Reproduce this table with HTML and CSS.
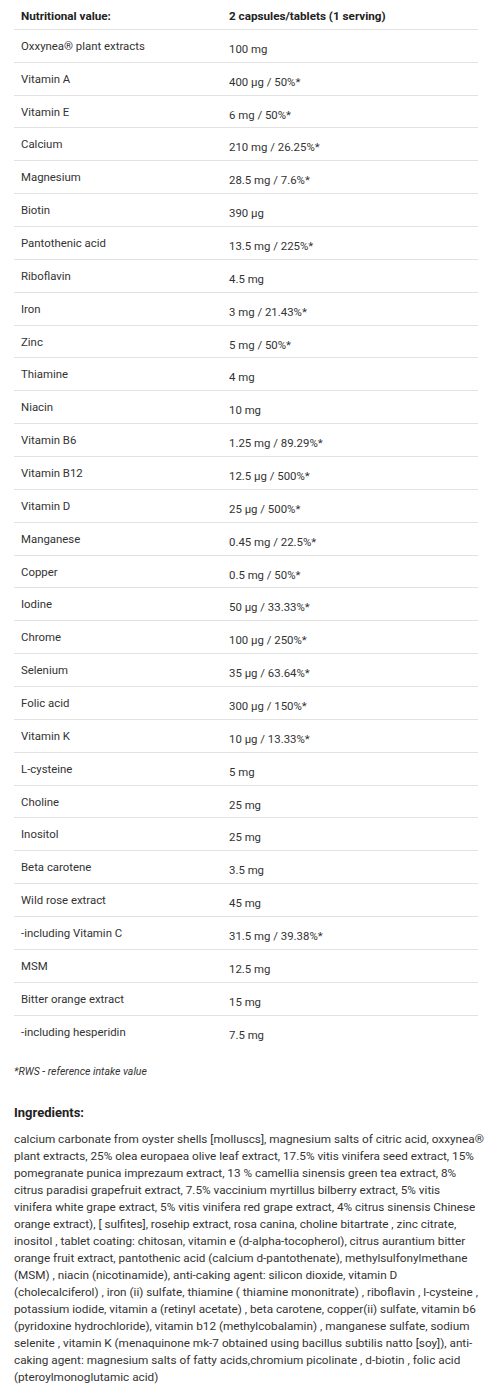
FILE: index.html
```html
<!DOCTYPE html>
<html lang="en">
<head>
<meta charset="utf-8">
<link rel="stylesheet" href="styles.css">
</head>
<body>
<div class="page">
  <div class="nutri">
    <div class="row head"><div class="lab">Nutritional value:</div><div class="val">2 capsules/tablets (1 serving)</div></div>
    <div class="row"><div class="lab">Oxxynea® plant extracts</div><div class="val">100 mg</div></div>
    <div class="row"><div class="lab">Vitamin A</div><div class="val">400 µg / 50%*</div></div>
    <div class="row"><div class="lab">Vitamin E</div><div class="val">6 mg / 50%*</div></div>
    <div class="row"><div class="lab">Calcium</div><div class="val">210 mg / 26.25%*</div></div>
    <div class="row"><div class="lab">Magnesium</div><div class="val">28.5 mg / 7.6%*</div></div>
    <div class="row"><div class="lab">Biotin</div><div class="val">390 µg</div></div>
    <div class="row"><div class="lab">Pantothenic acid</div><div class="val">13.5 mg / 225%*</div></div>
    <div class="row"><div class="lab">Riboflavin</div><div class="val">4.5 mg</div></div>
    <div class="row"><div class="lab">Iron</div><div class="val">3 mg / 21.43%*</div></div>
    <div class="row"><div class="lab">Zinc</div><div class="val">5 mg / 50%*</div></div>
    <div class="row"><div class="lab">Thiamine</div><div class="val">4 mg</div></div>
    <div class="row"><div class="lab">Niacin</div><div class="val">10 mg</div></div>
    <div class="row"><div class="lab">Vitamin B6</div><div class="val">1.25 mg / 89.29%*</div></div>
    <div class="row"><div class="lab">Vitamin B12</div><div class="val">12.5 µg / 500%*</div></div>
    <div class="row"><div class="lab">Vitamin D</div><div class="val">25 µg / 500%*</div></div>
    <div class="row"><div class="lab">Manganese</div><div class="val">0.45 mg / 22.5%*</div></div>
    <div class="row"><div class="lab">Copper</div><div class="val">0.5 mg / 50%*</div></div>
    <div class="row"><div class="lab">Iodine</div><div class="val">50 µg / 33.33%*</div></div>
    <div class="row"><div class="lab">Chrome</div><div class="val">100 µg / 250%*</div></div>
    <div class="row"><div class="lab">Selenium</div><div class="val">35 µg / 63.64%*</div></div>
    <div class="row"><div class="lab">Folic acid</div><div class="val">300 µg / 150%*</div></div>
    <div class="row"><div class="lab">Vitamin K</div><div class="val">10 µg / 13.33%*</div></div>
    <div class="row"><div class="lab">L-cysteine</div><div class="val">5 mg</div></div>
    <div class="row"><div class="lab">Choline</div><div class="val">25 mg</div></div>
    <div class="row"><div class="lab">Inositol</div><div class="val">25 mg</div></div>
    <div class="row"><div class="lab">Beta carotene</div><div class="val">3.5 mg</div></div>
    <div class="row"><div class="lab">Wild rose extract</div><div class="val">45 mg</div></div>
    <div class="row"><div class="lab">-including Vitamin C</div><div class="val">31.5 mg / 39.38%*</div></div>
    <div class="row"><div class="lab">MSM</div><div class="val">12.5 mg</div></div>
    <div class="row"><div class="lab">Bitter orange extract</div><div class="val">15 mg</div></div>
    <div class="row last"><div class="lab">-including hesperidin</div><div class="val">7.5 mg</div></div>
  </div>
  <p class="note">*RWS - reference intake value</p>
  <h3 class="ing-title">Ingredients:</h3>
  <p class="ing">calcium carbonate from oyster shells [molluscs], magnesium salts of citric acid, oxxynea®<br>
plant extracts, 25% olea europaea olive leaf extract, 17.5% vitis vinifera seed extract, 15%<br>
pomegranate punica imprezaum extract, 13 % camellia sinensis green tea extract, 8%<br>
citrus paradisi grapefruit extract, 7.5% vaccinium myrtillus bilberry extract, 5% vitis<br>
vinifera white grape extract, 5% vitis vinifera red grape extract, 4% citrus sinensis Chinese<br>
orange extract), [ sulfites], rosehip extract, rosa canina, choline bitartrate , zinc citrate,<br>
inositol , tablet coating: chitosan, vitamin e (d-alpha-tocopherol), citrus aurantium bitter<br>
orange fruit extract, pantothenic acid (calcium d-pantothenate), methylsulfonylmethane<br>
(MSM) , niacin (nicotinamide), anti-caking agent: silicon dioxide, vitamin D<br>
(cholecalciferol) , iron (ii) sulfate, thiamine ( thiamine mononitrate) , riboflavin , l-cysteine ,<br>
potassium iodide, vitamin a (retinyl acetate) , beta carotene, copper(ii) sulfate, vitamin b6<br>
(pyridoxine hydrochloride), vitamin b12 (methylcobalamin) , manganese sulfate, sodium<br>
selenite , vitamin K (menaquinone mk-7 obtained using bacillus subtilis natto [soy]), anti-<br>
caking agent: magnesium salts of fatty acids,chromium picolinate , d-biotin , folic acid<br>
(pteroylmonoglutamic acid)</p>
</div>
</body>
</html>
```

FILE: styles.css
```css
html, body {
  margin: 0;
  padding: 0;
  background: #fff;
}
body {
  font-family: Roboto, "Liberation Sans", sans-serif;
  color: #333;
}
.page {
  padding: 0 22px 0 14px;
}
.nutri {
  display: flex;
  flex-direction: column;
}
.row {
  display: grid;
  grid-template-columns: 207px 1fr;
  height: 32.87px;
  box-sizing: border-box;
  border-bottom: 1px solid #e2e2e2;
  font-size: 11.4px;
  line-height: 13px;
}
.row.last {
  border-bottom: none;
}
.row .lab {
  padding: 10px 0 0 7px;
}
.row .val {
  padding: 13px 0 0 8px;
}
.row.head {
  height: 29.87px;
  font-size: 11.7px;
  font-weight: 700;
  color: #222;
}
.row.head .lab,
.row.head .val {
  padding-top: 10px;
}
.note {
  margin: 16px 0 0;
  font-size: 10.5px;
  font-style: italic;
  line-height: 13px;
}
.ing-title {
  margin: 27px 0 0;
  font-size: 13px;
  font-weight: 700;
  line-height: 16px;
  color: #222;
}
.ing {
  margin: 10px -16px 0 0;
  font-size: 11.75px;
  line-height: 17px;
}
```
